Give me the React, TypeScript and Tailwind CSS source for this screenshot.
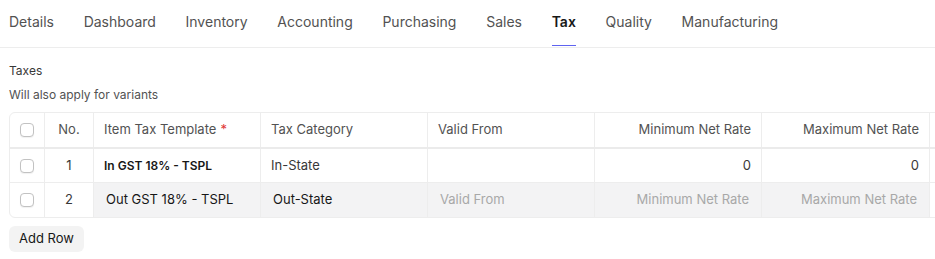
const tabs = [
  "Details",
  "Dashboard",
  "Inventory",
  "Accounting",
  "Purchasing",
  "Sales",
  "Tax",
  "Quality",
  "Manufacturing",
];

function Checkbox() {
  return (
    <span className="block w-[14px] h-[14px] rounded-[4px] border border-[#c2c2c2] bg-white shadow-[0_1px_1px_rgba(0,0,0,0.06)]" />
  );
}

export default function App() {
  return (
    <div
      className="w-[935px] h-[259px] overflow-hidden bg-white text-[#171717]"
      style={{ fontFamily: "Inter, 'Noto Sans', sans-serif" }}
    >
      {/* Tabs */}
      <div className="h-[48px] border-b border-[#ededed] flex items-stretch gap-[29.7px] pl-[9px]">
        {tabs.map((t) =>
          t === "Tax" ? (
            <div key={t} className="relative flex items-center pb-[5px] text-[14px] font-semibold text-[#171717]">
              {t}
              <span className="absolute left-0 right-0 bottom-[1px] h-[1px] bg-[#5f63f0]" />
            </div>
          ) : (
            <div key={t} className="flex items-center pb-[5px] text-[14px] text-[#525252]">
              {t}
            </div>
          )
        )}
      </div>

      <div className="pl-[9px]">
        <div className="mt-[15px] text-[12px] leading-[16px] text-[#383838]">Taxes</div>
        <div className="mt-[8px] text-[12px] leading-[16px] text-[#525252]">
          Will also apply for variants
        </div>

        {/* Table */}
        <div className="mt-[9px] w-[1000px] border border-[#ededed] rounded-[6px] text-[13px] overflow-hidden">
          {/* header */}
          <div className="flex h-[36px] border-b-2 border-[#ebebeb] text-[#525252]">
            <div className="w-[35px] shrink-0 flex items-center justify-center border-r border-[#ededed]">
              <Checkbox />
            </div>
            <div className="w-[49px] shrink-0 flex items-center justify-center border-r border-[#ededed]">No.</div>
            <div className="w-[167px] shrink-0 flex items-center px-[10px] border-r border-[#ededed]">
              Item Tax Template<span className="ml-[4px] text-[#e03636]">*</span>
            </div>
            <div className="w-[167px] shrink-0 flex items-center px-[10px] border-r border-[#ededed]">Tax Category</div>
            <div className="w-[167px] shrink-0 flex items-center px-[10px] border-r border-[#ededed]">Valid From</div>
            <div className="w-[167px] shrink-0 flex items-center justify-end px-[10px] border-r border-[#ededed]">Minimum Net Rate</div>
            <div className="w-[168px] shrink-0 flex items-center justify-end px-[10px] border-r border-[#ededed]">Maximum Net Rate</div>
            <div className="flex-1" />
          </div>

          {/* row 1 */}
          <div className="flex h-[34px] border-b border-[#ededed]">
            <div className="w-[35px] shrink-0 flex items-center justify-center border-r border-[#ededed]">
              <Checkbox />
            </div>
            <div className="w-[49px] shrink-0 flex items-center justify-center border-r border-[#ededed] text-[#383838]">1</div>
            <div className="w-[167px] shrink-0 flex items-center px-[10px] border-r border-[#ededed] text-[12px] font-semibold">
              In GST 18% - TSPL
            </div>
            <div className="w-[167px] shrink-0 flex items-center px-[10px] border-r border-[#ededed] text-[#383838]">In-State</div>
            <div className="w-[167px] shrink-0 border-r border-[#ededed]" />
            <div className="w-[167px] shrink-0 flex items-center justify-end px-[10px] border-r border-[#ededed] text-[#383838]">0</div>
            <div className="w-[168px] shrink-0 flex items-center justify-end px-[10px] border-r border-[#ededed] text-[#383838]">0</div>
            <div className="flex-1" />
          </div>

          {/* row 2 (editing) */}
          <div className="flex h-[34px]">
            <div className="w-[35px] shrink-0 flex items-center justify-center border-r border-[#ededed]">
              <Checkbox />
            </div>
            <div className="w-[49px] shrink-0 flex items-center justify-center border-r border-[#ededed] text-[#383838]">2</div>
            <div className="w-[167px] shrink-0 flex items-center px-[12px] border-r border-[#ededed] bg-[#f3f3f4] text-[#171717]">
              Out GST 18% - TSPL
            </div>
            <div className="w-[167px] shrink-0 flex items-center px-[12px] border-r border-[#ededed] bg-[#f3f3f4] text-[#171717]">Out-State</div>
            <div className="w-[167px] shrink-0 flex items-center px-[12px] border-r border-[#ededed] bg-[#f3f3f4] text-[#a8a8a8]">Valid From</div>
            <div className="w-[167px] shrink-0 flex items-center justify-end px-[12px] border-r border-[#ededed] bg-[#f3f3f4] text-[#a8a8a8]">Minimum Net Rate</div>
            <div className="w-[168px] shrink-0 flex items-center justify-end px-[12px] border-r border-[#ededed] bg-[#f3f3f4] text-[#a8a8a8]">Maximum Net Rate</div>
            <div className="flex-1" />
          </div>
        </div>

        <button className="mt-[8px] h-[26px] px-[10px] rounded-[6px] bg-[#f3f3f3] text-[13px] text-[#171717]">
          Add Row
        </button>
      </div>
    </div>
  );
}
